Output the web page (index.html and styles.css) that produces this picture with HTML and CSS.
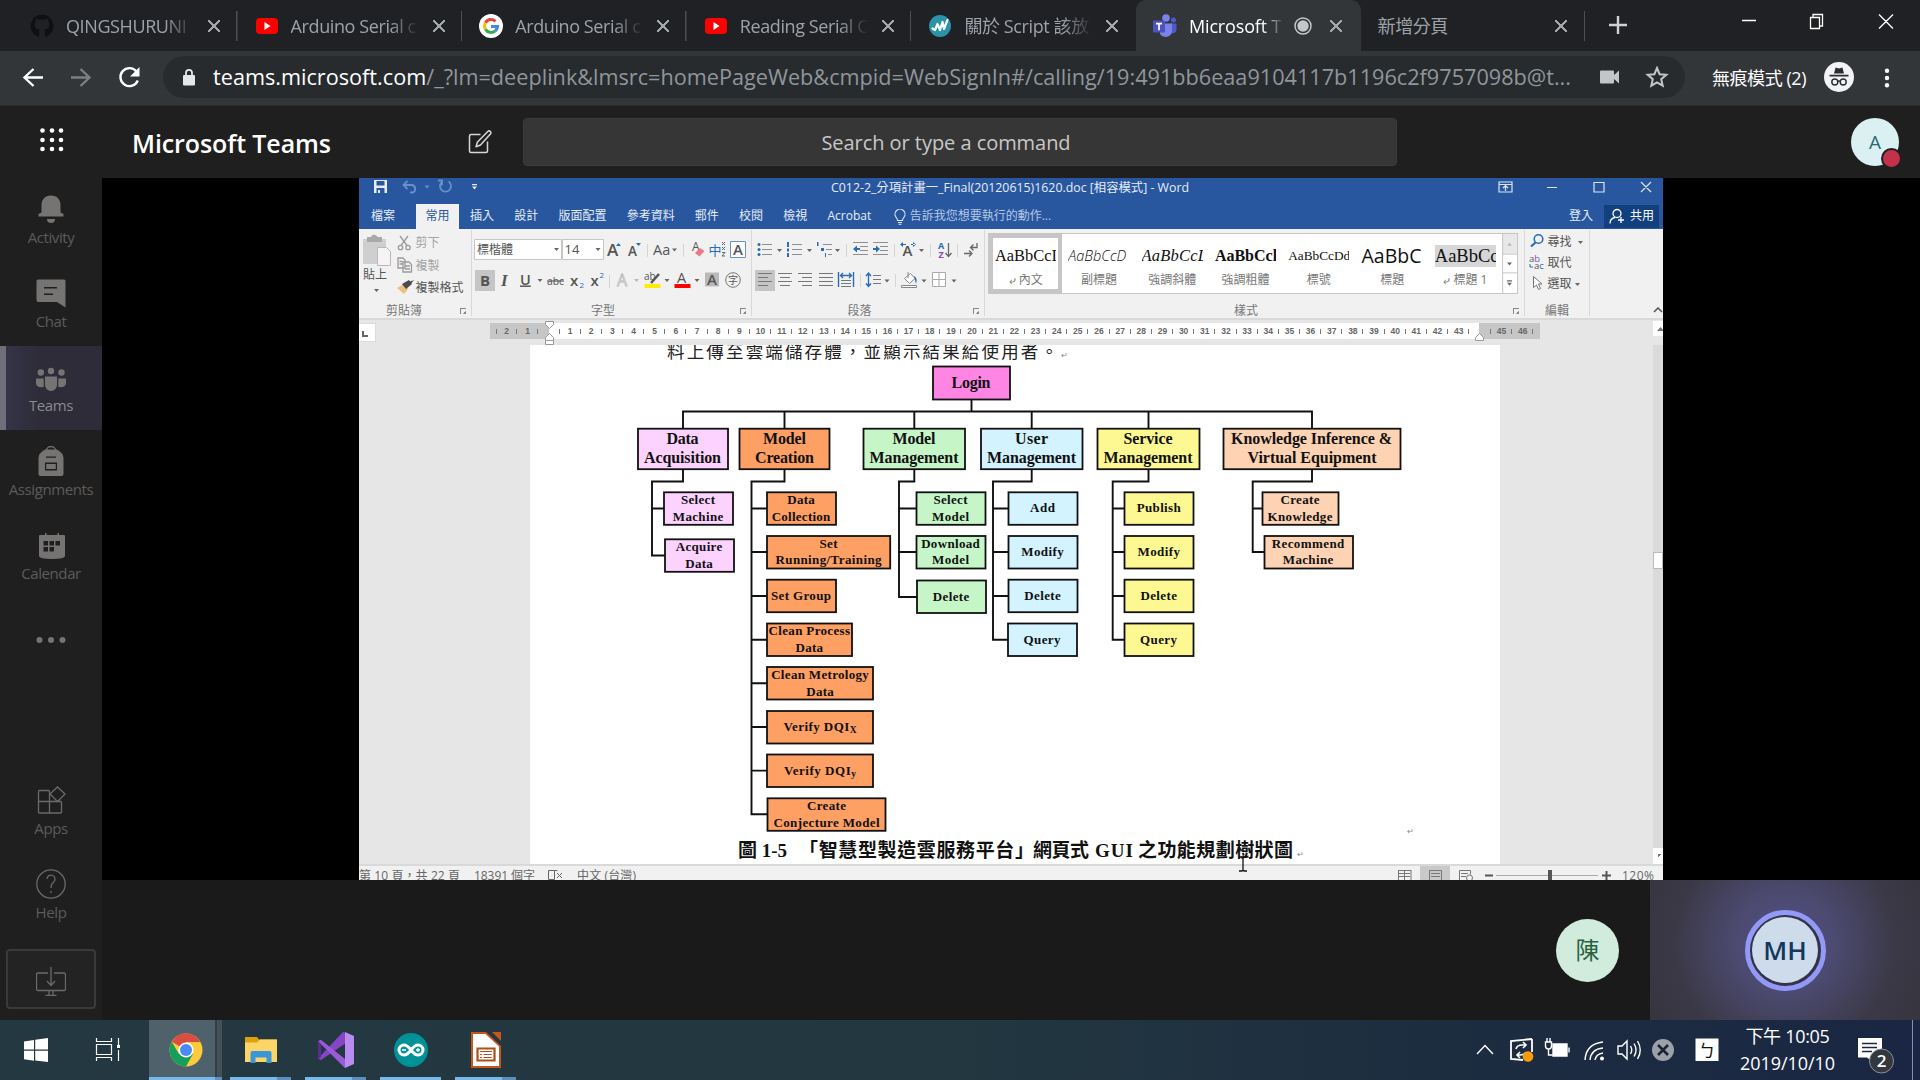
FILE: index.html
```html
<!DOCTYPE html>
<html lang="zh-Hant">
<head>
<meta charset="utf-8">
<title>Microsoft Teams</title>
<link rel="stylesheet" href="styles.css">
</head>
<body>
<div class="screen">

<header class="tabstrip">
  <div class="tab">
    <svg class="fav" viewBox="0 0 24 24"><path fill="#0f1012" d="M12 .5a11.5 11.5 0 0 0-3.6 22.4c.6.1.8-.2.8-.6v-4.800c0-1 .3-1.600.6-1.900-2.600-.3-5-1.200-5-5.200 0-1.200.4-2.200 1.100-2.900-.3-.8-.3-1.900.1-3 1.200 0 2.100.6 3 1.200a11 11 0 0 1 5.900 0c.9-.6 1.900-1.200 3-1.200.5 1.100.5 2.200.2 3 .7.700 1.100 1.700 1.100 2.900 0 4-2.500 4.900-5 5.200.4.4.7 1 .7 2v4.700c0 .4.2.7.8.6A11.500 11.500 0 0 0 12 .5z"/></svg>
    <span class="tab-title">QINGSHURUNI</span><span class="x"></span>
  </div>
  <div class="tab">
    <svg class="fav" viewBox="0 0 24 24"><rect x="1" y="4" width="22" height="16" rx="4" fill="#f00"/><path d="M9.500 8v8l6-4z" fill="#fff"/></svg>
    <span class="tab-title">Arduino Serial c</span><span class="x"></span>
  </div>
  <div class="tab">
    <svg class="fav" viewBox="0 0 24 24"><circle cx="12" cy="12" r="12" fill="#fff"/><g fill="none" stroke-width="3"><path stroke="#ea4335" d="M6.400 8.800A6.500 6.500 0 0 1 16.500 7.300"/><path stroke="#fbbc05" d="M6.400 8.800a6.600 6.600 0 0 0 0 6.400"/><path stroke="#34a853" d="M6.400 15.200a6.500 6.500 0 0 0 9.900 1.600"/><path stroke="#4285f4" d="M16.300 16.800a6.500 6.500 0 0 0 2.200-4.300H12"/></g></svg>
    <span class="tab-title">Arduino Serial c</span><span class="x"></span>
  </div>
  <div class="tab">
    <svg class="fav" viewBox="0 0 24 24"><rect x="1" y="4" width="22" height="16" rx="4" fill="#f00"/><path d="M9.500 8v8l6-4z" fill="#fff"/></svg>
    <span class="tab-title">Reading Serial C</span><span class="x"></span>
  </div>
  <div class="tab nosep">
    <svg class="fav" viewBox="0 0 24 24"><circle cx="12" cy="12" r="11" fill="#2a93a5"/><path d="M4.500 14.500l2.500 1.500 2.500-6 2.500 6 2.500-8 1.500 7 3.500-9" fill="none" stroke="#fff" stroke-width="2.200" stroke-linejoin="round" stroke-linecap="round"/></svg>
    <span class="tab-title">關於 Script 該放</span><span class="x"></span>
  </div>
  <div class="tab active">
    <svg class="fav" viewBox="0 0 24 24"><circle cx="20.500" cy="6" r="2.500" fill="#5059c9"/><path d="M17 9.500h6.500v6a4 4 0 0 1-6.500 3z" fill="#5059c9"/><circle cx="13" cy="4" r="3.800" fill="#7b83eb"/><path d="M7 9.500h12V17a6.500 6.500 0 0 1-12 3z" fill="#7b83eb"/><rect y="6.500" width="12" height="12" rx="1" fill="#4b53bc"/><path d="M3 9.700h6M6 9.700v6.500" stroke="#fff" stroke-width="1.700"/></svg>
    <span class="tab-title">Microsoft T</span>
    <svg class="rec" viewBox="0 0 18 18"><circle cx="9" cy="9" r="8" fill="none" stroke="#c4c7ca" stroke-width="1.500"/><circle cx="9" cy="9" r="5.700" fill="#c4c7ca"/></svg>
    <span class="x"></span>
  </div>
  <div class="tab plain">
    <span class="tab-title">新增分頁</span><span class="x"></span>
  </div>
  <svg class="plus" viewBox="0 0 18 18"><path d="M9 0v18M0 9h18" stroke="#d0d3d6" stroke-width="2.400"/></svg>
  <svg class="winbtns" viewBox="1720 0 200 51"><g fill="none" stroke="#fff" stroke-width="1.300"><path d="M1742 20.500h14M1810.500 17.500h9v11h-9zM1813 17.500v-3h9.500v11.500h-3M1879 14.500l14 14M1893 14.500l-14 14"/></g></svg>
</header>

<nav class="toolbar">
  <svg class="navbtns" viewBox="0 51 163 54"><g fill="none" stroke-width="2.400"><path stroke="#fff" d="M43 77.500H25M33.500 69l-9 8.500 9 8.500"/><path stroke="#7c7f82" d="M71 77.500h18M80.500 69l9 8.500-9 8.500"/><path stroke="#fff" d="M136.500 71.500a9 9 0 1 0 1.300 9"/></g><path fill="#fff" d="M139.500 67v9.500h-9.500z"/></svg>
  <div class="omnibox">
    <svg class="lock" viewBox="0 0 14 18"><rect x="1" y="7" width="12" height="10.500" rx="1" fill="#e4e6e8"/><path d="M4 8V4.800a3 3 0 0 1 6 0V8" fill="none" stroke="#e4e6e8" stroke-width="1.800"/></svg>
    <svg class="url" viewBox="0 0 1360 42"><text y="29" textLength="1358" lengthAdjust="spacingAndGlyphs"><tspan fill="#fff">teams.microsoft.com</tspan>/_?lm=deeplink&amp;lmsrc=homePageWeb&amp;cmpid=WebSignIn#/calling/19:491bb6eaa9104117b1196c2f9757098b@t...</text></svg>
    <svg class="cam" viewBox="0 0 20 14"><path fill="#c3c6c9" d="M1 .5h12a1 1 0 0 1 1 1V5l5-4.500v13L14 9v3.500a1 1 0 0 1-1 1H1a1 1 0 0 1-1-1v-11a1 1 0 0 1 1-1z"/></svg>
    <svg class="star" viewBox="0 0 24 24"><path fill="none" stroke="#c3c6c9" stroke-width="2" d="M12 3l2.600 6.200 6.700.6-5.100 4.400 1.500 6.500L12 17.300l-5.700 3.400 1.500-6.500-5.100-4.400 6.700-.6z"/></svg>
  </div>
  <span class="incog">無痕模式 (2)</span>
  <svg class="incog-ic" viewBox="0 0 30 30"><circle cx="15" cy="15" r="15" fill="#f1f3f4"/><path fill="#2b2d30" d="M5.500 12.800h19v1.700h-19zM10 11.500l1.600-6 3.400 1 3.400-1 1.600 6z"/><g fill="none" stroke="#2b2d30" stroke-width="1.400"><circle cx="10.800" cy="20" r="3"/><circle cx="19.200" cy="20" r="3"/><path d="M13.800 19.500q1.200-1 2.400 0"/></g></svg>
  <svg class="dots" viewBox="0 0 6 20"><g fill="#fff"><circle cx="3" cy="2.800" r="2.200"/><circle cx="3" cy="10" r="2.200"/><circle cx="3" cy="17.300" r="2.200"/></g></svg>
</nav>

<header class="teams-head">
  <svg class="waffle" viewBox="0 0 24 24"><g fill="#fff"><circle cx="2.500" cy="2.500" r="2.300"/><circle cx="12" cy="2.500" r="2.300"/><circle cx="21" cy="2.500" r="2.300"/><circle cx="2.500" cy="12" r="2.300"/><circle cx="12" cy="12" r="2.300"/><circle cx="21" cy="12" r="2.300"/><circle cx="2.500" cy="21" r="2.300"/><circle cx="12" cy="21" r="2.300"/><circle cx="21" cy="21" r="2.300"/></g></svg>
  <h1>Microsoft Teams</h1>
  <svg class="compose" viewBox="0 0 24 24"><g fill="none" stroke="#d6d6d6" stroke-width="1.500" stroke-linejoin="round"><path d="M12.500 4.500H3a1.500 1.500 0 0 0-1.500 1.500v15A1.500 1.500 0 0 0 3 22.500h15a1.500 1.500 0 0 0 1.500-1.500v-9.500"/><path d="M19.800 1.500a1.800 1.800 0 0 1 2.600 2.600L12.500 15l-4.500 1.800 1.500-4.700z"/></g></svg>
  <div class="search">Search or type a command</div>
  <div class="me">A<span class="busy"></span></div>
</header>

<div class="main">
  <aside class="rail">
    <div class="item"><svg viewBox="0 0 30 30"><path d="M15 1.500c6 0 9.500 4.200 9.500 9.500v7.500l3 1.500v2.500H2.500V20l3-1.500V11C5.500 5.700 9 1.500 15 1.500zM11 25h8a4 4 0 0 1-8 0z"/></svg><span>Activity</span></div>
    <div class="item"><svg viewBox="0 0 30 30"><path fill-rule="evenodd" d="M2 1.500h26a1.500 1.500 0 0 1 1.500 1.500v26.500L21 24H2.500Q.5 24 .5 22V3A1.500 1.500 0 0 1 2 1.500zM8 9v1.500h13V9zM8 15.500V17h9v-1.500z"/></svg><span>Chat</span></div>
    <div class="item on"><svg viewBox="0 0 30 30"><circle cx="4.800" cy="5.500" r="3.200"/><circle cx="15" cy="4" r="3.200"/><circle cx="25.500" cy="5.500" r="3.200"/><path d="M9 9.500h12V18a6 6 0 0 1-12 0zM0 11.500h7.700V20Q0 21 0 16zM22.300 11.500H30V16q0 5-7.700 4z"/></svg><span>Teams</span></div>
    <div class="item"><svg viewBox="0 0 30 30"><path d="M10.500 4.500a4.500 4 0 0 1 9 0" fill="none" stroke="#757473" stroke-width="1.300"/><path fill-rule="evenodd" d="M9 3.500h12q6.500 3.500 6.500 9V28a2 2 0 0 1-2 2h-21a2 2 0 0 1-2-2V12.500Q2.500 7 9 3.500zM10 10.500v1.300h10v-1.300zM9 16.500v8h12v-8zm1.200 1.500h9.600v5h-9.600z"/></svg><span>Assignments</span></div>
    <div class="item"><svg viewBox="0 0 30 30"><path fill-rule="evenodd" d="M9 3h1.500v2h11V3H23v2h5a1 1 0 0 1 1 1v20q0 3-13 3T3 26V6a1 1 0 0 1 1-1h5zM7.500 11v4.500H12V11zm6 0v4.500H18V11zm6 0v4.500H24V11zm-12 6v4.500H12V17zm6 0v4.500H18V17z"/></svg><span>Calendar</span></div>
    <div class="item more"><svg viewBox="0 0 30 30"><circle cx="3.500" cy="15" r="3"/><circle cx="15" cy="15" r="3"/><circle cx="26.500" cy="15" r="3"/></svg></div>
    <div class="grow"></div>
    <div class="item line"><svg viewBox="0 0 30 30"><path d="M3.500 5.500h9a1 1 0 0 1 1 1v21.500M2.500 16.500h22a1 1 0 0 1 1 1V27a1 1 0 0 1-1 1h-21a1 1 0 0 1-1-1V6.500a1 1 0 0 1 1-1M21.500 2l7.500 7-7.500 7.500-7.500-7.500z"/></svg><span>Apps</span></div>
    <div class="item line"><svg viewBox="0 0 30 30"><circle cx="15" cy="15" r="14.200"/><path d="M11 10a4 4 0 1 1 6.500 3.200Q15 15 15 19M15 22v2"/></svg><span>Help</span></div>
    <div class="getapp"><svg viewBox="0 0 30 30"><path d="M12 7H2a1.500 1.500 0 0 0-1.500 1.500V23A1.500 1.500 0 0 0 2 24.500h26a1.500 1.500 0 0 0 1.500-1.500V8.500A1.500 1.500 0 0 0 28 7H18M15 1v18M11 15l4 4.500 4-4.500M13 24.500V29M17 24.500V29M9.500 29.500h11"/></svg></div>
  </aside>

  <section class="call">
    <div class="stage">
      <div class="word">
        <div class="w-title">
          <svg class="qat" viewBox="359 178 140 22"><path fill="#e8eef7" d="M374 180h13v13h-13zM376.500 181v4.500h8V181zM376.500 188v5h8v-5z" fill-rule="evenodd"/><rect x="378" y="190" width="2" height="3" fill="#e8eef7"/><g fill="none" stroke="#6a90c8" stroke-width="1.800"><path d="M407.500 181l-4 4 4 4M404 185h8a4 4 0 0 1 1 7.500h-3"/><path d="M442.500 181.500a5.500 5.500 0 1 0 6 0M442 185.500v-5h-4"/></g><path fill="#6a90c8" d="M424.500 185.500h5l-2.500 3z"/><path fill="#e8eef7" d="M472 184h5v1.300h-5zM472 186.500h5l-2.500 3z"/></svg>
          <svg class="doc-name" viewBox="831 178 360 22"><text x="831" y="192" textLength="358" lengthAdjust="spacingAndGlyphs">C012-2_分項計畫一_Final(20120615)1620.doc [相容模式] - Word</text></svg>
          <svg class="w-btns" viewBox="1490 178 173 22"><g fill="none" stroke="#dbe5f3" stroke-width="1.200"><path d="M1499 182h13v10h-13zM1499 184.500h13M1505.500 191v-5M1503 188l2.500-2.500 2.500 2.500M1547 187.500h10M1594 182.500h10v9.500h-10zM1641 182l10 10M1651 182l-10 10"/></g></svg>
        </div>
        <div class="w-tabs">
          <span class="t-file">檔案</span><span class="t-home">常用</span><span>插入</span><span>設計</span><span>版面配置</span><span>參考資料</span><span>郵件</span><span>校閱</span><span>檢視</span><span class="acro">Acrobat</span>
          <svg class="bulb" viewBox="0 0 12 16"><path d="M3.500 11.500Q3.500 10 2 8.200a5 5 0 1 1 8 0Q8.500 10 8.500 11.500zM4 13.500h4M4.500 15.200h3" fill="none" stroke="#dbe5f3" stroke-width="1.100"/></svg>
          <span class="tell">告訴我您想要執行的動作...</span>
          <span class="signin">登入</span>
          <span class="share"><svg viewBox="0 0 16 16"><g fill="none" stroke="#fff" stroke-width="1.300"><circle cx="8" cy="5.500" r="4"/><path d="M1 15.500q0-5 5-6M12 9v6M9 12h6"/></g></svg>共用</span>
        </div>
        <div class="ribbon">
          <div class="group g-clip">
            <svg viewBox="359 230 112 74">
              <path fill="#cfcfcf" d="M363 239h23v25h-23z"/><path fill="#a9a9a9" d="M367 237h4q2-5 7 0h4v5h-15z"/><path fill="#f6f3f6" stroke="#bdb4bd" d="M377.500 247.500h9l4 4v14h-13z"/>
              <g fill="none" stroke="#9b9b9b" stroke-width="1.300"><path d="M400 236l7 9.500M408 236l-7 9.500"/><circle cx="400.500" cy="247.500" r="2.200"/><circle cx="408" cy="247.500" r="2.200"/><path d="M398 258h5l2 2v8h-7zM403 262h6l2.500 2.500v7.500H403zM405 266h5M405 269h5M399.500 261.500h3M399.500 264h3"/></g>
              <path fill="#efbf80" d="M397 288l7-4 4 5-4 5z"/><path fill="#4b4b4b" d="M402 284l7-4 3 4-6 5zM409 282l5-2-4 5z"/>
              <text x="363" y="279">貼上</text><path fill="#666" d="M374 289h5l-2.500 3z"/>
              <text x="415.500" y="247" fill="#a5a5a5">剪下</text><text x="415.500" y="269.500" fill="#a5a5a5">複製</text><text x="415.500" y="292">複製格式</text>
            </svg>
            <footer>剪貼簿<i class="launch"></i></footer>
          </div>
          <div class="group g-font">
            <svg viewBox="472 230 279 74">
              <path fill="#fff" stroke="#c6c6c6" d="M474.500 239.500h87v20h-87zM562.500 239.500h41v20h-41z"/><text x="477" y="254">標楷體</text><text x="564.500" y="254" font-size="13">14</text>
              <g fill="#666"><path d="M554 248h5l-2.500 3zM595.500 248h5l-2.500 3zM672 248.500h5l-2.500 3zM537.500 279h5l-2.500 3zM664.500 279h5l-2.500 3zM694.500 279h5l-2.500 3z"/><path fill="#bbb" d="M634 279h5l-2.500 3z"/></g>
              <text x="607" y="256" font-size="17" font-weight="600">A</text><path fill="#2b6cb8" d="M616 246h5l-2.500-3zM636 243h5l-2.500 3z"/><text x="628" y="256" font-size="13.500" font-weight="600">A</text><text x="653" y="254.500" font-size="14.500">Aa</text>
              <text x="692" y="251" font-size="12">A</text><path fill="#e8798b" d="M695 253l5-5 4.500 3-5 5.500z"/><text x="708.500" y="254.500" fill="#2b6cb8" font-size="13">中</text><path d="M722 242l3 3M725 242l-3 3M722 247l3 3M725 247l-3 3M722 252.500h3l-3 3.500h3" stroke="#666" fill="none"/>
              <path d="M730.500 241.500h15v16h-15z" fill="#fff" stroke="#6a94c6"/><text x="733" y="255" font-size="15" font-weight="600">A</text>
              <path fill="#c5c5c5" d="M475 270h20v21h-20z"/><text x="480" y="285.500" font-size="15" font-weight="700">B</text><text x="501" y="286" font-size="17" font-style="italic" font-weight="600" font-family="Liberation Serif">I</text><text x="520" y="284.500" font-size="14.500" font-weight="600" text-decoration="underline">U</text><text x="547" y="285" font-size="11" text-decoration="line-through" textLength="17" lengthAdjust="spacingAndGlyphs">abc</text><text x="570" y="285.500" font-size="15" font-weight="600">x</text><text x="579.500" y="288" font-size="8" fill="#2b6cb8">2</text><text x="590.500" y="285.500" font-size="15" font-weight="600">x</text><text x="599.500" y="278" font-size="8" fill="#2b6cb8">2</text>
              <text x="617" y="286" font-size="16" fill="#f8f8f8" stroke="#bbb" stroke-width=".8">A</text><text x="644" y="280" font-size="10">ab</text><path d="M651 283l8-9" stroke="#555" stroke-width="2.500"/><path fill="#ffec00" d="M644.500 284h16v4h-16z"/><text x="677" y="283" font-size="14.500">A</text><path fill="#f00" d="M674.500 284h16v4h-16z"/><path fill="#b9b9b9" d="M705 272.500h14v14h-14z"/><text x="707" y="285" font-size="15" font-weight="600">A</text><circle cx="733" cy="280" r="7.300" fill="none" stroke="#777"/><text x="728" y="284" font-size="10">字</text>
              <path stroke="#d5d5d5" d="M647.500 244v13M683.500 244v13M609.500 275v13"/>
            </svg>
            <footer>字型<i class="launch"></i></footer>
          </div>
          <div class="group g-para">
            <svg viewBox="752 230 232 74">
              <g stroke="#8f8f8f" stroke-width="1.200"><path d="M762 244.500h10M762 249.500h10M762 254.500h10M792 244.500h10M792 249.500h10M792 254.500h10M823 244.500h9M826 249.500h6M828 254.500h4M853 242.500h15M860 246.500h8M860 250.500h8M853 254.500h15M873 242.500h15M880 246.500h8M880 250.500h8M873 254.500h15"/></g>
              <g fill="#2b6cb8"><circle cx="759" cy="244.500" r="1.500"/><circle cx="759" cy="249.500" r="1.500"/><circle cx="759" cy="254.500" r="1.500"/><path d="M787 242h2v5h-2zM787 248.500h2v3h-2zM787 253h2v4h-2zM817 242h1.500v4H817zM821 248h3v3h-3zM825 253h1v4h-1zM853 249l4-3.500v2.500h3v2h-3v2.500zM880 249l-4-3.500v2.500h-3v2h3v2.500zM900 244.500l3-2.500v5zM916 244.500l-3-2.500v5zM902 244h4v1h-4zM911 244h4v1h-4z"/></g>
              <g fill="#666"><path d="M777 249h5l-2.500 3zM807 249h5l-2.500 3zM835 249h5l-2.500 3zM919 249h5l-2.500 3zM884.500 279.500h5l-2.500 3zM921.500 279.500h5l-2.500 3zM951.500 279.500h5l-2.500 3z"/></g>
              <text x="902.500" y="256" font-size="15" font-weight="600">A</text><text x="938" y="249" font-size="9" fill="#2b6cb8" font-weight="700">A</text><text x="938.500" y="258" font-size="9" fill="#8a4fb5" font-weight="700">Z</text><path fill="none" stroke="#666" stroke-width="1.300" d="M948.500 243v13M945.500 253l3 3.500 3-3.500M977 243v4.500h-6M973.500 244.500l-3 3 3 3M964 253.500h7M969 250.500l3 3-3 3"/>
              <path fill="#c5c5c5" d="M755 270h20v21h-20z"/>
              <g stroke="#777" stroke-width="1.200"><path d="M758 273.500h14M758 277.500h10M758 281.500h14M758 285.500h10M778 273.500h14M780 277.500h10M778 281.500h14M780 285.500h10M798 273.500h14M802 277.500h10M798 281.500h14M802 285.500h10M819 273.500h14M819 277.500h14M819 281.500h14M819 285.500h14M841 280.500h10M841 283.500h10M841 286.500h10M873 275.500h8M873 279.500h8M873 283.500h8"/></g>
              <path fill="none" stroke="#2b6cb8" stroke-width="1.400" d="M838.500 272v15M853.500 272v15M841 275.500h10M843 273l-2.500 2.500 2.500 2.500M849 273l2.500 2.500-2.500 2.500M868.500 273v13M866 276l2.500-3 2.500 3M866 283.500l2.500 3 2.500-3"/>
              <path fill="#fff" stroke="#888" d="M904.500 278.500l6-5 4.500 5-5.500 5zM901.500 285.500h15v2h-15zM908 278v-6"/><path fill="#2b6cb8" d="M914 276q4 2 2 8z"/><path fill="#fff" stroke="#aaa" d="M932.500 272.500h13v14h-13zM939 272.500v14M932.500 279.500h13"/>
              <path stroke="#d5d5d5" d="M846.500 244v13M894.500 244v13M930.500 244v13M957.500 244v13M860.500 274v13M895.500 274v13"/>
            </svg>
            <footer>段落<i class="launch"></i></footer>
          </div>
          <div class="group g-style">
            <div class="gallery">
              <div class="st sel"><b class="p1">AaBbCcI</b><span>⤶ 內文</span></div>
              <div class="st"><b class="p2">AaBbCcD</b><span>副標題</span></div>
              <div class="st"><b class="p3">AaBbCcL</b><span>強調斜體</span></div>
              <div class="st"><b class="p4">AaBbCcl</b><span>強調粗體</span></div>
              <div class="st"><b class="p5">AaBbCcDd</b><span>標號</span></div>
              <div class="st"><b class="p6">AaBbC</b><span>標題</span></div>
              <div class="st"><b class="p7">AaBbCc</b><span>⤶ 標題 1</span></div>
              <svg class="gal-scroll" viewBox="0 0 15 60"><path fill="#e8e8e8" d="M0 0h15v20H0z"/><path fill="none" stroke="#c6c6c6" d="M.5 0v60M0 20.500h15M0 39.500h15"/><path fill="#bbb" d="M5 12h5l-2.500-3z"/><path fill="#666" d="M5 29h5l-2.500 3zM5 47h5v1.200H5zM5 49.500h5l-2.500 3z"/></svg>
            </div>
            <footer>樣式<i class="launch"></i></footer>
          </div>
          <div class="group g-edit">
            <svg viewBox="1524 230 64 74">
              <circle cx="1537.500" cy="239" r="4.300" fill="none" stroke="#2b6cb8" stroke-width="1.600"/><path d="M1534.500 242.500l-4.500 4" stroke="#2b6cb8" stroke-width="2.200"/><text x="1546.500" y="246">尋找</text><path fill="#666" d="M1577 241h5l-2.500 3zM1574 283h5l-2.500 3z"/>
              <text x="1528" y="262" font-size="9.500">a<tspan fill="#8a4fb5">b</tspan></text><text x="1533" y="269" font-size="9.500">a<tspan fill="#2b6cb8">c</tspan></text><path d="M1529 264v3h3" stroke="#2b6cb8" fill="none"/><text x="1546.500" y="267">取代</text>
              <path d="M1532.500 276.500v11l3-2.500 2 4.500 2-1-2-4.500h3.500z" fill="#fff" stroke="#777"/><text x="1546.500" y="288">選取</text>
            </svg>
            <footer>編輯</footer>
          </div>
          <svg class="collapse" viewBox="0 0 10 6"><path d="M1 5l4-4 4 4" fill="none" stroke="#555" stroke-width="1.500"/></svg>
        </div>
        <div class="rulerrow">
          <span class="corner"></span>
          <div class="rul-l"><i>2</i><i>1</i></div>
          <div class="rul"><i>1</i><i>2</i><i>3</i><i>4</i><i>5</i><i>6</i><i>7</i><i>8</i><i>9</i><i>10</i><i>11</i><i>12</i><i>13</i><i>14</i><i>15</i><i>16</i><i>17</i><i>18</i><i>19</i><i>20</i><i>21</i><i>22</i><i>23</i><i>24</i><i>25</i><i>26</i><i>27</i><i>28</i><i>29</i><i>30</i><i>31</i><i>32</i><i>33</i><i>34</i><i>35</i><i>36</i><i>37</i><i>38</i><i>39</i><i>40</i><i>41</i><i>42</i><i>43</i></div>
          <div class="rul-r"><i>45</i><i>46</i></div>
          <svg class="markers" viewBox="359 320 1304 25"><path d="M496.500 329v5M559.500 329v5M1490.500 329v5" stroke="#777"/><g fill="#fff" stroke="#999"><path d="M545.500 321.500h8v3l-4 4-4-4zM545.500 340.500v-3l4-4 4 4v7h-8zM545.500 340.500h8M1475.500 340.500v-3l4-4 4 4v3z"/></g><path fill="#fff" d="M1653 321h10v15h-10z"/><path fill="#777" d="M1657 331h7l-3.500-4z"/></svg>
        </div>
        <div class="docarea">
          <svg class="page" viewBox="530 345 970 520">
            <text class="kai" x="667" y="358" textLength="391">料上傳至雲端儲存體，並顯示結果給使用者。</text>
            <text class="ret" x="1061" y="358">↵</text><text class="ret" x="1407" y="834">↵</text><text class="ret" x="1297" y="857">↵</text>
            <g class="wires"><path d="M971.500 399v12M683 429v-17.500h629V429M784.500 411.500V429M914.300 411.500V429M1031.700 411.500V429M1148.500 411.500V429"/>
            <path d="M683 469v12.500h-31v74h13M652 508.500h12"/><path d="M784.500 469v12.500h-33v332.800h16M751.500 508.500h16M751.500 552h16M751.500 596h16M751.500 639.700h16M751.500 683.300h16M751.500 727h16M751.500 770.600h16"/>
            <path d="M914.300 469v12.500H899V597h18M899 508.500h17M899 552h17"/><path d="M1031.700 469v12.500H993v158.200h15M993 508.500h15M993 552h15M993 596h15"/><path d="M1148.500 469v12.500h-35.800v158.200h12M1112.700 508.500h12M1112.700 552h12M1112.700 596h12"/><path d="M1312 469v12.500h-59.300V552h12M1252.700 508.500h10"/></g>
            <g class="box">
              <rect x="933" y="366.500" width="77" height="33" fill="#fe85e4"/>
              <g fill="#fcd3ff"><rect x="638" y="428.700" width="90" height="40.500"/><rect x="664" y="492.300" width="69" height="32.500"/><rect x="665" y="539.300" width="69" height="32.500"/></g>
              <g fill="#fe9f64"><rect x="739.500" y="428.700" width="90" height="40.500"/><rect x="767" y="492.300" width="69" height="32.500"/><rect x="767" y="536" width="123.200" height="32.500"/><rect x="767" y="579.700" width="69" height="32.500"/><rect x="767" y="623.500" width="85" height="32.500"/><rect x="767" y="667" width="106" height="32.500"/><rect x="767" y="711" width="106" height="32.500"/><rect x="767" y="754.500" width="106" height="32.500"/><rect x="767.500" y="798.300" width="118" height="32.500"/></g>
              <g fill="#c6f6c8"><rect x="863.500" y="428.700" width="101.500" height="40.500"/><rect x="916.500" y="492.300" width="69" height="32.500"/><rect x="916.500" y="536" width="69" height="32.500"/><rect x="917" y="580.500" width="69" height="32.500"/></g>
              <g fill="#d2f3ff"><rect x="981" y="428.700" width="101.500" height="40.500"/><rect x="1008.500" y="492.300" width="69" height="32.500"/><rect x="1008.500" y="536" width="69" height="32.500"/><rect x="1008.500" y="579.700" width="69" height="32.500"/><rect x="1008" y="623.500" width="69" height="32.500"/></g>
              <g fill="#fdf891"><rect x="1097.500" y="428.700" width="102" height="40.500"/><rect x="1124.500" y="492.300" width="69" height="32.500"/><rect x="1124.500" y="536" width="69" height="32.500"/><rect x="1124.500" y="579.700" width="69" height="32.500"/><rect x="1124.500" y="623.500" width="69" height="32.500"/></g>
              <g fill="#fdd3b3"><rect x="1223.500" y="428.700" width="177" height="40.500"/><rect x="1262.500" y="492.300" width="76" height="32.500"/><rect x="1264.500" y="536" width="88.500" height="32.500"/></g>
            </g>
            <g class="lv2">
              <text x="971" y="388" textLength="39">Login</text>
              <text x="682.500" y="444" textLength="32">Data</text><text x="682.500" y="463" textLength="77">Acquisition</text>
              <text x="784.500" y="444" textLength="43">Model</text><text x="784.500" y="463" textLength="59">Creation</text>
              <text x="914" y="444" textLength="43">Model</text><text x="914" y="463" textLength="89">Management</text>
              <text x="1031.500" y="444" textLength="33">User</text><text x="1031.500" y="463" textLength="89">Management</text>
              <text x="1148" y="444" textLength="49">Service</text><text x="1148" y="463" textLength="89">Management</text>
              <text x="1311.500" y="444" textLength="161">Knowledge Inference &amp;</text><text x="1312" y="463" textLength="129">Virtual Equipment</text>
            </g>
            <g class="lv3">
              <text x="698" y="504" textLength="34">Select</text><text x="698" y="520.500" textLength="50.500">Machine</text>
              <text x="699" y="551" textLength="46.500">Acquire</text><text x="699" y="567.500" textLength="27.500">Data</text>
              <text x="801" y="504" textLength="27.500">Data</text><text x="801" y="520.500" textLength="58.700">Collection</text>
              <text x="828.500" y="547.500" textLength="18">Set</text><text x="828.500" y="564" textLength="106">Running/Training</text>
              <text x="801" y="600" textLength="60">Set Group</text>
              <text x="809.300" y="635" textLength="81.500">Clean Process</text><text x="809.300" y="651.500" textLength="27.500">Data</text>
              <text x="820" y="679" textLength="97.700">Clean Metrology</text><text x="820" y="695.500" textLength="27.500">Data</text>
              <text x="820" y="731" textLength="73">Verify DQI<tspan font-size="9.500" dy="2">X</tspan></text><text x="820" y="774.500" textLength="72">Verify DQI<tspan font-size="9.500" dy="2">y</tspan></text>
              <text x="826.500" y="810" textLength="39">Create</text><text x="826.500" y="826.500" textLength="106">Conjecture Model</text>
              <text x="950.500" y="504" textLength="34">Select</text><text x="950.500" y="520.500" textLength="37">Model</text>
              <text x="950.500" y="547.500" textLength="58.700">Download</text><text x="950.500" y="564" textLength="37">Model</text><text x="951" y="600.500" textLength="36.500">Delete</text>
              <text x="1042.500" y="512" textLength="25">Add</text><text x="1042.500" y="556" textLength="42.500">Modify</text><text x="1042.500" y="600" textLength="36.500">Delete</text><text x="1042" y="643.500" textLength="37">Query</text>
              <text x="1158.700" y="512" textLength="44">Publish</text><text x="1158.700" y="556" textLength="42.500">Modify</text><text x="1158.700" y="600" textLength="36.500">Delete</text><text x="1158.500" y="643.500" textLength="37">Query</text>
              <text x="1300" y="504" textLength="39">Create</text><text x="1300" y="520.500" textLength="65">Knowledge</text>
              <text x="1308" y="547.500" textLength="72.500">Recommend</text><text x="1308" y="564" textLength="50.500">Machine</text>
            </g>
            <text class="cap" y="856.500"><tspan x="738" textLength="49">圖 1-5</tspan> <tspan x="799" textLength="235">「智慧型製造雲服務平台」</tspan><tspan x="1033" textLength="56">網頁式</tspan> <tspan x="1095" textLength="38">GUI</tspan> <tspan x="1138" textLength="155">之功能規劃樹狀圖</tspan></text>
          </svg>
          <div class="vscroll"><i class="thumb"></i><i class="down"></i></div>
        </div>
        <div class="statusbar">
          <svg viewBox="359 866 1304 14"><text x="359" y="880" textLength="101">第 10 頁，共 22 頁</text><text x="474" y="880" textLength="61">18391 個字</text><path d="M548.500 870.500h6v9h-6zM554.500 870.500h3M557 873l5 5M562 873l-5 5" fill="none" stroke="#666"/><text x="577" y="880" textLength="59">中文 (台灣)</text>
          <path fill="#c9c9c9" d="M1420 866h30v14h-30z"/><g fill="none" stroke="#777"><path d="M1398.500 870v12M1404.500 870v12M1411 870v12M1398 870.500h13M1399 873.500h11M1399 876.500h11M1429.500 870.500h12v12h-12zM1431 873.500h9M1431 876.500h9M1459.500 880v-9.500h11v4M1461 873.500h7M1461 876.500h5"/><circle cx="1469.500" cy="878" r="3"/><path d="M1496 875.500h102" stroke="#aaa"/></g><path fill="#555" d="M1485 874.500h8v2h-8zM1548 870h4v10h-4zM1602 874.500h9v2h-9zM1605.500 871h2v9h-2z"/><text x="1622" y="880" textLength="32">120%</text></svg>
        </div>
        <svg class="ibeam" viewBox="0 0 10 16"><path d="M1 1h3l1 1 1-1h3M5 2v12M1 15h3l1-1 1 1h3" fill="none" stroke="#111" stroke-width="1.300"/></svg>
      </div>
    </div>
    <div class="people">
      <div class="av green">陳</div>
      <div class="speaker"><div class="ring"><div class="av blue">MH</div></div></div>
    </div>
  </section>
</div>

<footer class="taskbar">
  <svg class="tb-left" viewBox="0 1020 149 60"><path fill="#fff" d="M24 1041.500l10-1.500v9.500H24zM35.200 1039.800L48 1038v11.500H35.200zM24 1050.800h10v10l-10-1.500zM35.200 1050.800H48V1062l-12.800-1.500z"/><g fill="none" stroke="#fff" stroke-width="1.200"><path d="M96.500 1038v3.500h15V1038M96.500 1044.500h15v10h-15zM96.500 1061v-3.500h15v3.500M118.500 1038v7M118.500 1050v11"/></g><path fill="#fff" d="M117 1045h3v3h-3z"/></svg>
  <div class="app cur"><svg viewBox="0 0 36 36"><circle cx="18" cy="18" r="16.500" fill="#fdcb3c"/><path d="M18 18L3.700 9.800A16.500 16.500 0 0 1 32.500 10H18z" fill="#db4d41"/><path d="M3.700 9.800A16.500 16.500 0 0 0 18 34.500L25 22l-7-4-7 4z" fill="#169f5a"/><circle cx="18" cy="18" r="7.600" fill="#fff"/><circle cx="18" cy="18" r="6" fill="#4a8af4"/></svg><u></u></div>
  <div class="app"><svg viewBox="0 0 36 36"><path d="M2 5h12l2 2.500H34V12H2z" fill="#e0a00e"/><path d="M2 10.500h12L17 7.500h17V30H2z" fill="#fdd467"/><path d="M7.500 31V21a2 2 0 0 1 2-2h17a2 2 0 0 1 2 2v10h-5v-5.500h-11V31z" fill="#3b96d9"/></svg><u></u></div>
  <div class="app"><svg viewBox="0 0 36 36"><path d="M0 10l3-2L27 28v8L3 12v13l-3 2z" fill="#6c35ab"/><path d="M3 28l-3-1.500L25 0l3 1v10z" fill="#8645c6"/><path d="M0 9l3-1 24 19v9z" fill="#9b5bd8"/><path d="M0 9l3 3v13l-3 2z" fill="#5b2a94"/><path d="M27 0l9 4v28l-9 4z" fill="#b98af0"/></svg><u></u></div>
  <div class="app one"><svg viewBox="0 0 36 36"><circle cx="18" cy="18" r="17" fill="#009297"/><g fill="none" stroke="#fff" stroke-width="3"><path d="M18 18c-3-4-5-5-7-5a5 5 0 0 0 0 10c2 0 4-1 7-5s5-5 7-5a5 5 0 0 1 0 10c-2 0-4-1-7-5z"/></g><path d="M9 18h4M23 18h4M25 16v4" stroke="#fff" stroke-width="1.300"/></svg><u></u></div>
  <div class="app"><svg viewBox="0 0 36 36"><path d="M3 0h15l15 14v22H3z" fill="#c9551a"/><path d="M5 2h12.500L31 14.500V34H5z" fill="#fff"/><path d="M24 0h9v9z" fill="#c9551a"/><path d="M9.500 16.500h17v12h-17z" fill="#fff" stroke="#b14d1a" stroke-width="2.200"/><path d="M12 19.500h12M12 22.500h2M15.500 22.500h8M12 25.500h2M15.500 25.500h8" stroke="#b14d1a" stroke-width="1.200"/></svg><u></u></div>
  <svg class="tray" viewBox="1470 1020 260 60"><g fill="none" stroke="#fff" stroke-width="1.400">
    <path d="M1477 1054l8-8.500 8 8.500"/><path stroke-width="1.800" d="M1532 1039l-21 2v18l12 1M1532 1039v13"/><path d="M1516 1049q1-4 6-4h3M1523 1042l3 3-3 3M1526 1052q-1 3-6 3h-3M1520 1052l-3 3 3 3" stroke-width="1.600"/>
    <path d="M1545.500 1042v4q0 3 3 3t3-3v-4zM1547 1038v4M1550 1038v4M1548.500 1049v6h5"/><path fill="#fff" d="M1553 1044h14v12h-14z"/><path d="M1569 1047.500v5"/>
    <path d="M1585 1060q1-16 18-18M1590 1060q1-11 13-12M1595 1060q1-6 8-7"/><path d="M1618 1046v8h4l5 5v-18l-5 5zM1630.500 1046q2.500 4 0 8M1634 1043.500q4 6.500 0 13M1637.500 1041q5.500 9 0 18"/></g>
    <circle cx="1528" cy="1056.500" r="5.300" fill="#ff9a0b"/><circle cx="1602" cy="1058.500" r="2" fill="#fff"/><circle cx="1663" cy="1050" r="11" fill="#9ba0a9"/><path d="M1658 1045l10 10M1668 1045l-10 10" stroke="#1b2433" stroke-width="2.600"/><path fill="#fff" d="M1695.500 1038.500h23v22.500h-23z"/><text class="ime" x="1698.500" y="1056.500">ㄅ</text></svg>
  <div class="clock"><span>下午 10:05</span><span class="date">2019/10/10</span></div>
  <svg class="notif" viewBox="1850 1020 70 60"><path fill="#fff" d="M1858 1038h24v19.500h-10v4l-5-4h-9z"/><path d="M1862 1043.500h15M1862 1047.500h15M1862 1051.500h10" stroke="#1b2742" stroke-width="1.400"/><circle cx="1881.500" cy="1061" r="12" fill="#33383f" stroke="#8b9097"/><text x="1881.500" y="1067" text-anchor="middle">2</text><path d="M1912.500 1020v60" stroke="#8a92a2"/></svg>
</footer>
</div>
</body>
</html>
```
FILE: styles.css
```css
* { box-sizing: border-box; }
body { margin: 0; background: #000; font-family: "Open Sans", "Noto Sans CJK TC", sans-serif; }
svg { display: block; flex: none; }
.screen { width: 1920px; height: 1080px; display: flex; flex-direction: column; overflow: hidden; }

/* browser tabs */
.tabstrip { height: 51px; background: #202124; display: flex; padding-left: 13px; flex: none; }
.tab { width: 224.600px; height: 51px; display: flex; align-items: center; padding-left: 17px; flex: none; background: linear-gradient(#4c4e51, #4c4e51) right 11px / 1.5px 30px no-repeat; font-size: 18px; color: #9da3a9; }
.tab.nosep, .tab.active { background-image: none; }
.fav { width: 24px; height: 24px; margin-right: 12px; }
.tab-title { width: 130px; height: 28px; line-height: 28px; overflow: hidden; white-space: nowrap; letter-spacing: -.4px; -webkit-mask-image: linear-gradient(90deg, #000 76%, transparent 99%); mask-image: linear-gradient(90deg, #000 76%, transparent 99%); }
.x { width: 12px; height: 12px; margin-left: 12px; flex: none; background: linear-gradient(45deg, transparent 44%, #a4a7aa 44% 56%, transparent 56%), linear-gradient(-45deg, transparent 44%, #a4a7aa 44% 56%, transparent 56%); }
.tab.active { background: #323639; color: #fff; border-radius: 10px 10px 0 0; }
.tab.active .tab-title { width: 96px; letter-spacing: -.15px; }
.rec { width: 18px; height: 18px; margin-left: 9px; }
.tab.active .x { margin-left: 18px; }
.tab.plain .tab-title { width: 170px; -webkit-mask-image: none; mask-image: none; }
.tab.plain { padding-left: 17px; }
.tab.plain .x { margin-left: 7px; }
.plus { width: 18px; height: 18px; margin: 16px 0 0 24px; }
.winbtns { width: 200px; height: 51px; margin-left: auto; }

/* address bar */
.toolbar { height: 54px; background: #323639; display: flex; align-items: flex-start; flex: none; }
.navbtns { width: 163px; height: 54px; }
.omnibox { width: 1522px; height: 42px; margin-top: 5px; border-radius: 21px; background: #282b2e; display: flex; align-items: center; padding-left: 19px; }
.lock { width: 14px; height: 18px; margin-right: 17px; }
.url { width: 1360px; height: 42px; font-size: 21px; fill: #8f969c; }
.cam { width: 20px; height: 14px; margin-left: 27px; }
.star { width: 24px; height: 24px; margin-left: 25px; }
.incog { width: 101px; margin: 15px 0 0 27px; color: #fff; font-size: 18px; line-height: 24px; white-space: nowrap; letter-spacing: -.45px; }
.incog-ic { width: 30px; height: 30px; margin: 11px 0 0 11px; }
.dots { width: 6px; height: 20px; margin: 17px 0 0 30px; }

/* teams header */
.teams-head { height: 73px; background: #1f1f1f; border-top: 1px solid #2d2d2d; display: flex; align-items: flex-start; flex: none; color: #fff; }
.waffle { width: 24px; height: 24px; margin: 22px 0 0 40px; }
h1 { width: 336px; margin: 21px 0 0 68px; font-size: 25px; line-height: 32px; font-weight: 600; letter-spacing: -.1px; }
.compose { width: 24px; height: 24px; margin: 24px 0 0 0; }
.search { width: 874px; height: 48px; margin: 12px 0 0 31px; border-radius: 4px; background: #363636; border: 1px solid #3b3b3b; color: #c8c8c8; font-size: 20px; letter-spacing: -.05px; line-height: 47px; text-align: center; padding-right: 28px; }
.me { position: relative; width: 48px; height: 48px; margin: 12px 0 0 454px; border-radius: 50%; background: #daf0f3; color: #2b6a70; font-size: 19px; line-height: 48px; text-align: center; }
.busy { position: absolute; right: -3px; bottom: -3px; width: 21px; height: 21px; border-radius: 50%; background: #c4314b; border: 2.500px solid #1f1f1f; }

/* left rail */
.main { height: 842px; display: flex; flex: none; }
.rail { width: 102px; background: #201f1f; display: flex; flex-direction: column; align-items: center; padding-bottom: 11px; flex: none; }
.item { width: 102px; height: 84px; padding-top: 16px; display: flex; flex-direction: column; align-items: center; color: #5c5b5a; font-size: 15px; letter-spacing: -.4px; flex: none; }
.item svg { width: 30px; height: 30px; fill: #757473; }
.item span { line-height: 20px; margin-top: 3px; }
.item.on { background: linear-gradient(90deg, #353348, #2d2c38 35%); border-left: 6px solid #6f6e7a; padding-right: 6px; color: #8a8a8e; padding-top: 21px; }
.item.on span { margin-top: -2px; }
.more { padding-top: 27px; }
.grow { flex: 1; }
.item.line svg, .getapp svg { fill: none; stroke: #6b6a69; stroke-width: 1.300; }
.getapp { width: 90px; height: 60px; margin-top: 12px; border: 2px solid #3a3a3a; border-radius: 4px; background: #242323; display: flex; align-items: center; justify-content: center; flex: none; padding-top: 4px; }
.getapp svg { width: 30px; height: 30px; }

/* shared screen */
.call { flex: 1; display: flex; flex-direction: column; }
.stage { height: 702px; background: #000; padding-left: 257px; }
.word { position: relative; width: 1304px; height: 702px; overflow: hidden; display: flex; flex-direction: column; background: #e6e6e6; color: #555; font-size: 12px; }
.w-title { height: 26px; background: #2857a0; display: flex; flex: none; }
.qat { width: 140px; height: 22px; }
.doc-name { width: 360px; height: 22px; margin-left: 332px; fill: #e6edf7; font-size: 12px; }
.w-btns { width: 173px; height: 22px; margin-left: auto; }
.w-tabs { height: 25px; background: #2857a0; display: flex; align-items: center; padding-left: 12px; color: #e6edf7; flex: none; }
.w-tabs > span { margin-right: 20.200px; line-height: 20px; padding-bottom: 2px; white-space: nowrap; }
.w-tabs .t-file { margin-right: 21px; }
.w-tabs .t-home { width: 43px; height: 25px; line-height: 24px; background: #f1f1f1; color: #2857a0; text-align: center; margin-right: 11px; }
.w-tabs .acro { width: 46px; letter-spacing: 0; }
.bulb { width: 12px; height: 16px; margin-right: 4px; }
.w-tabs .tell { color: #b6c8e4; width: 142px; letter-spacing: 0; }
.w-tabs .signin { margin: 0 11px 0 auto; }
.w-tabs .share { width: 55px; height: 23px; background: #123f7d; color: #fff; display: flex; align-items: center; margin-right: 4px; padding-left: 5px; gap: 5px; }
.share svg { width: 16px; height: 16px; }
.ribbon { height: 91px; background: #f1f1f1; border-bottom: 2px solid #d9d9d9; display: flex; flex: none; padding-top: 1px; }
.group { border-right: 1px solid #d8d8d8; margin-bottom: 2px; height: 86px; flex: none; color: #777; }
.group > svg { width: 100%; height: 74px; fill: #555; }
.group footer { position: relative; height: 14px; line-height: 14px; text-align: center; padding-right: 17px; }
.g-clip { width: 113px; }
.g-font { width: 280px; }
.g-para { width: 233px; }
.g-style { width: 540px; }
.g-edit { width: 65px; }
.group.g-clip footer { padding-right: 22px; }
.group.g-edit footer { padding-right: 0; }
.launch { position: absolute; right: 5px; top: 4px; width: 6px; height: 6px; border-left: 1px solid #888; border-top: 1px solid #888; background: radial-gradient(circle at 90% 90%, #888 30%, transparent 35%); }
.gallery { width: 530px; height: 61px; margin: 3px 0 10px 3px; background: #fff; border: 1px solid #c6c6c6; display: flex; }
.st { width: 73.300px; height: 59px; padding: 11px 6px 0; text-align: center; flex: none; }
.st.sel { box-shadow: inset 0 0 0 4px #c6c6c6; }
.st b { display: block; height: 22px; color: #111; white-space: nowrap; overflow: hidden; text-align: left; }
.st span { display: block; line-height: 16px; margin-top: 5px; color: #777; white-space: nowrap; }
.st .p1 { font: 16.400px/22px "Liberation Serif"; }
.st .p2 { font: italic 300 14.500px/22px "Open Sans"; }
.st .p3 { font: italic 16.500px/22px "Liberation Serif"; letter-spacing: .2px; }
.st .p4 { font: bold 16px/22px "Liberation Serif"; }
.st .p5 { font: 13.300px/22px "Liberation Serif"; }
.st .p6 { font: 19.500px/22px "Open Sans"; }
.st .p7 { font: 18.500px/22px "Liberation Serif"; background: #d6d6d6; }
.gal-scroll { width: 15px; height: 59px; }
.collapse { width: 10px; height: 6px; margin: 77px 0 0 63px; }

.rulerrow { position: relative; height: 25px; display: flex; padding-top: 3px; flex: none; }
.corner { width: 17px; height: 19px; margin-right: 114px; background: linear-gradient(#666, #666) 3px 11px / 6px 2px no-repeat, linear-gradient(#666, #666) 3px 7px / 2px 6px no-repeat, #fff; border: 1px solid #ddd; border-left: 0; flex: none; }
.rul, .rul-l, .rul-r { height: 16px; display: flex; font: bold 8.500px/17px "Liberation Sans"; color: #666; flex: none; }
.rulerrow i { width: 21.170px; font-style: normal; text-align: center; flex: none; background: linear-gradient(#777, #777) right 6px / 1px 5px no-repeat; }
.rul { width: 930px; background: #fff; padding-left: 10.500px; }
.rul-l { width: 59px; background: #c6c6c6; padding-left: 6px; }
.rul-r { width: 61px; background: #c6c6c6; padding-left: 12px; }
.markers { position: absolute; left: 0; top: 0; width: 1304px; height: 25px; }

.docarea { height: 519px; display: flex; justify-content: space-between; padding-left: 171px; flex: none; }
.page { width: 970px; height: 520px; background: #fff; }
.kai { font: 17.500px "Noto Sans CJK TC"; fill: #222; }
.ret { font-size: 8px; fill: #888; }
.wires { fill: none; stroke: #111; stroke-width: 1.900; }
.box rect { stroke: #111; stroke-width: 1.800; }
.lv2, .lv3 { font-family: "Liberation Serif"; font-weight: bold; text-anchor: middle; fill: #111; }
.lv2 { font-size: 16px; }
.lv3 { font-size: 13px; }
.cap { font-family: "Liberation Serif", "Noto Sans CJK TC"; font-size: 19px; font-weight: bold; fill: #111; }
.vscroll { width: 10px; height: 519px; background: #dadada; display: flex; flex-direction: column; }
.vscroll .thumb { height: 17px; margin-top: 207px; background: #fff; border: 1px solid #bbb; }
.vscroll .down { height: 16px; margin-top: auto; background: linear-gradient(135deg, #777 50%, transparent 50%) 5px 6px / 4px 4px no-repeat, #fff; }
.statusbar { height: 16px; background: #f1f1f1; border-top: 2px solid #d9d9d9; flex: none; }
.statusbar svg { width: 1304px; height: 14px; fill: #666; font-size: 12px; }
.ibeam { position: absolute; left: 879px; top: 678px; width: 10px; height: 16px; }

.people { height: 140px; background: #1a1a1a; display: flex; justify-content: flex-end; align-items: center; }
.av { display: flex; align-items: center; justify-content: center; border-radius: 50%; }
.green { width: 63px; height: 63px; background: #d1ecdd; color: #27623f; font-size: 24px; margin-right: 31px; padding-bottom: 3px; }
.speaker { width: 270px; height: 140px; display: flex; align-items: center; justify-content: center; background: radial-gradient(circle at 50% 45%, #52508a 0, #4c4a70 50px, #3b3947 110px, #37353f 150px); }
.ring { width: 81px; height: 81px; border: 5px solid #9299f7; border-radius: 50%; background: #34334a; display: flex; align-items: center; justify-content: center; }
.blue { width: 66px; height: 66px; background: #cddbea; color: #14375e; font-size: 26px; font-weight: 600; }

/* windows taskbar */
.taskbar { height: 60px; display: flex; background: linear-gradient(90deg, #233840, #223740 50%, #1d2d40 75%, #1a2643); flex: none; }
.tb-left { width: 149px; height: 60px; }
.app { width: 61px; height: 60px; margin-right: 14px; display: flex; flex-direction: column; align-items: center; padding-top: 12px; flex: none; }
.app svg { width: 36px; height: 36px; margin-bottom: 9px; }
.app u { width: 61px; height: 3px; background: linear-gradient(90deg, #76b9ed 47px, #5b8fbd 47px); }
.cur { width: 73px; margin-right: 8px; background: linear-gradient(90deg, #4f626b 66px, #343e45 66px 68px, #444f56 68px); }
.cur u { width: 73px; background: linear-gradient(90deg, #76b9ed 66px, #5b8fbd 66px); }
.one u { background: #76b9ed; }
.tray { width: 260px; height: 60px; margin-left: auto; }
.ime { font-size: 17px; fill: #111; }
.clock { width: 120px; display: flex; flex-direction: column; align-items: center; color: #fff; font-size: 18px; line-height: 27px; padding-top: 3px; letter-spacing: -.3px; padding-right: 5px; }
.clock .date { letter-spacing: -.05px; }
.notif { width: 70px; height: 60px; }
.notif text { font-size: 17px; font-weight: 600; fill: #fff; }
```
